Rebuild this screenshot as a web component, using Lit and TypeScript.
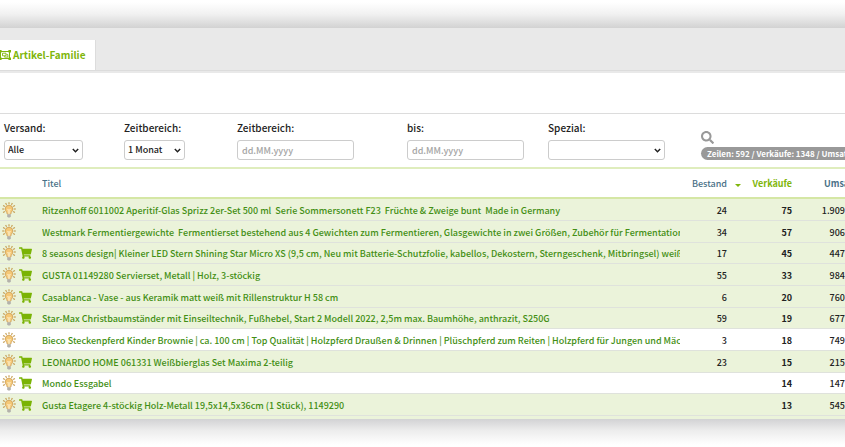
import { LitElement, html, css, svg, nothing } from "lit";
import { customElement } from "lit/decorators.js";
import { classMap } from "lit/directives/class-map.js";

interface Article {
  title: string;
  stock: string;
  sales: string;
  revenue: string;
  cart: boolean;
  marked: boolean;
}

const row = (title: string, stock: string, sales: string, revenue: string, cart = true, marked = true): Article =>
  ({ title, stock, sales, revenue, cart, marked });

const ARTICLES: Article[] = [
  row("Ritzenhoff 6011002 Aperitif-Glas Sprizz 2er-Set 500 ml  Serie Sommersonett F23  Früchte & Zweige bunt  Made in Germany", "24", "75", "1.909", false),
  row("Westmark Fermentiergewichte  Fermentierset bestehend aus 4 Gewichten zum Fermentieren, Glasgewichte in zwei Größen, Zubehör für Fermentation", "34", "57", "906", false),
  row("8 seasons design| Kleiner LED Stern Shining Star Micro XS (9,5 cm, Neu mit Batterie-Schutzfolie, kabellos, Dekostern, Sterngeschenk, Mitbringsel) weiß", "17", "45", "447"),
  row("GUSTA 01149280 Servierset, Metall | Holz, 3-stöckig", "55", "33", "984"),
  row("Casablanca - Vase - aus Keramik matt weiß mit Rillenstruktur H 58 cm", "6", "20", "760"),
  row("Star-Max Christbaumständer mit Einseiltechnik, Fußhebel, Start 2 Modell 2022, 2,5m max. Baumhöhe, anthrazit, S250G", "59", "19", "677"),
  row("Bieco Steckenpferd Kinder Brownie | ca. 100 cm | Top Qualität | Holzpferd Draußen & Drinnen | Plüschpferd zum Reiten | Holzpferd für Jungen und Mäc", "3", "18", "749", false, false),
  row("LEONARDO HOME 061331 Weißbierglas Set Maxima 2-teilig", "23", "15", "215"),
  row("Mondo Essgabel", "", "14", "147", true, false),
  row("Gusta Etagere 4-stöckig Holz-Metall 19,5x14,5x36cm (1 Stück), 1149290", "", "13", "545"),
];

const RAYS = [-120, -90, -60, -30, 0, 30, 60, 90, 120];

const bulbIcon = html`<svg class="bulb" viewBox="0 0 14 16" aria-hidden="true">
  ${RAYS.map((a) => svg`<path d="M7 0.2V2.2" transform="rotate(${a} 7 7)" stroke="#c39a4c" stroke-width="1.1" />`)}
  <path d="M7 3.200a3.800 3.800 0 0 0-3.800 3.800c0 2.100 1.900 2.800 2 5h3.600c.1-2.200 2-2.900 2-5A3.800 3.800 0 0 0 7 3.200z" fill="#f5c877" stroke="#cfa057" stroke-width="0.9" />
  <path d="M5.300 7.200l1 1.200.7-1.200.7 1.200 1-1.200M6.300 8.400V12M7.700 8.400V12" fill="none" stroke="#fff3d4" stroke-width="0.7" />
  <path d="M5.200 12.300h3.600v2L8 15.600H6l-.8-1.300z" fill="#b3b1ab" />
</svg>`;

const cartIcon = html`<svg class="cart" viewBox="0 0 576 512" aria-hidden="true"><path fill="currentColor" d="M528.12 301.319l47.273-208C578.806 78.301 567.391 64 551.99 64H159.208l-9.166-44.81C147.758 8.021 137.93 0 126.529 0H24C10.745 0 0 10.745 0 24v16c0 13.255 10.745 24 24 24h69.883l70.248 343.435C147.325 417.1 136 435.222 136 456c0 30.928 25.072 56 56 56s56-25.072 56-56c0-15.674-6.447-29.835-16.824-40h209.647C430.447 426.165 424 440.326 424 456c0 30.928 25.072 56 56 56s56-25.072 56-56c0-22.172-12.888-41.332-31.579-50.405l5.517-24.276c3.413-15.018-8.002-29.319-23.403-29.319H218.117l-6.545-32h293.145c11.206 0 20.92-7.754 23.403-18.681z"/></svg>`;

const searchIcon = html`<svg viewBox="0 0 512 512" aria-hidden="true"><path fill="currentColor" d="M505 442.7L405.3 343c-4.500-4.500-10.600-7-17-7H372c27.600-35.300 44-79.700 44-128C416 93.100 322.900 0 208 0S0 93.100 0 208s93.100 208 208 208c48.300 0 92.700-16.400 128-44v16.300c0 6.400 2.500 12.500 7 17l99.700 99.700c9.400 9.400 24.600 9.400 33.900 0l28.300-28.300c9.400-9.400 9.400-24.600.1-34zM208 336c-70.700 0-128-57.200-128-128 0-70.700 57.200-128 128-128 70.700 0 128 57.200 128 128 0 70.700-57.200 128-128 128z"/></svg>`;

const groupIcon = html`<svg class="group" viewBox="0 0 12 10" aria-hidden="true">
  <path d="M1.500 1.500h9v7h-9z" fill="none" stroke="currentColor" stroke-width="1" />
  <path d="M0 0h2.600v2.600H0zM9.400 0H12v2.600H9.400zM0 7.400h2.600V10H0zM9.400 7.400H12V10H9.400z" fill="currentColor" />
  <path d="M3.500 3.200h3.500v2.600H3.500zM7.500 4.600h1.400v2.500H5.500V6.300" fill="none" stroke="currentColor" stroke-width="0.9" />
</svg>`;

@customElement("app-root")
export class AppRoot extends LitElement {
  static styles = css`
    :host {
      display: block;
      overflow: hidden;
      background: #fff;
      color: #222;
      font: 500 9px/16px "Noto Sans CJK SC", "Noto Sans", sans-serif;
    }
    * { box-sizing: border-box; }
    button, input, select { font: inherit; color: inherit; margin: 0; }
    button { border: 0; background: none; padding: 0; cursor: pointer; }
    a { color: inherit; text-decoration: none; }
    svg { display: block; flex: none; }

    .shade { height: 28px; }
    .shade.above { background: linear-gradient(#fff 8%, #f1f1f1 50%, #d2d2d2); }
    .shade.below { background: linear-gradient(#d2d2d4, #ececec 40%, #fff 92%); }

    .tabs {
      display: flex;
      background: #e9e9e9;
      padding-top: 12px;
      border-bottom: 2px solid #e9e9e9;
      box-shadow: inset 0 -1px #dcdcdc;
    }
    .tab {
      display: flex;
      align-items: center;
      gap: 2px;
      height: 30px;
      margin-left: -1px;
      margin-bottom: 1px;
      padding-right: 10px;
      background: #fff;
      border-right: 1px solid #dcdcdc;
      color: #80b60b;
      font-size: 10px;
      font-weight: 700;
    }
    .group { width: 12px; height: 10px; }
    .spacer { height: 40px; }

    .filters {
      display: grid;
      grid-template-columns: 120px 113px 170px 141px 153px 1fr;
      padding: 6px 0 7px 4px;
      border-top: 1px solid #dcdcdc;
      border-bottom: 2px solid #dfedbd;
    }
    .field { display: flex; flex-direction: column; align-items: flex-start; gap: 4px; }
    .field label { font-size: 10px; }
    .control {
      height: 20px;
      padding: 0 4px;
      border: 1px solid #ccc;
      border-radius: 3px;
      background: #fff;
      outline: 0;
    }
    select.control {
      appearance: none;
      padding: 0 14px 0 3px;
      background: #fff url("data:image/svg+xml,%3Csvg xmlns='http://www.w3.org/2000/svg' viewBox='0 0 7 5'%3E%3Cpath d='M.8 1l2.700 2.700L6.200 1' fill='none' stroke='%23222' stroke-width='1.500'/%3E%3C/svg%3E") no-repeat right 3px center / 7px 5px;
    }
    .control::placeholder { color: #a5a5a5; opacity: 1; }
    .small { width: 61px; }
    .medium { width: 79px; }
    .large { width: 117px; }
    .summary { display: flex; flex-direction: column; align-items: flex-start; gap: 3px; padding-top: 11px; min-width: 0; }
    .search { color: #999; }
    .search svg { width: 13px; height: 13px; }
    .badge {
      padding: 0 6px;
      line-height: 13px;
      border-radius: 7px;
      background: #999;
      color: #fff;
      font-size: 8px;
      font-weight: 700;
      white-space: nowrap;
    }

    table { width: 100%; table-layout: fixed; border-collapse: separate; border-spacing: 0; }
    th, td { padding: 2px 0 0; height: 22px; text-align: right; white-space: pre; }
    th { height: 30px; color: #4a7187; font-weight: 500; border-bottom: 2px solid #d5e7a5; }
    td { border-bottom: 1px solid #dfe2dc; }
    tr:nth-child(3n) td { height: 21px; }
    .marked td { background: #ebf3da; }
    .icons { width: 42px; padding: 0; }
    .title { text-align: left; overflow: hidden; }
    td.title { color: #438f14; }
    .stock { width: 47px; }
    .sales { width: 65px; }
    .revenue { width: 53px; }
    td.sales, th.revenue { font-weight: 700; }
    th.revenue { text-align: left; padding-left: 32px; }
    .sorted { color: #80b60b; font-weight: 700; display: inline-flex; align-items: center; gap: 12px; }
    .sorted svg { width: 6px; height: 3px; margin-top: 4px; }
    .marks { display: flex; align-items: center; gap: 3px; padding-left: 2px; }
    .bulb { width: 14px; height: 16px; }
    .cart { width: 13px; height: 12px; color: #7ab305; }
    .rest { height: 3px; background: #ebf3da; }
  `;

  render() {
    return html`
      <div class="shade above"></div>
      <nav class="tabs"><a class="tab" href="#familie">${groupIcon}<span>Artikel-Familie</span></a></nav>
      <div class="spacer"></div>
      <form class="filters">
        <div class="field">
          <label for="shipping">Versand:</label>
          <select class="control medium" id="shipping"><option>Alle</option></select>
        </div>
        <div class="field">
          <label for="period">Zeitbereich:</label>
          <select class="control small" id="period"><option>1 Monat</option></select>
        </div>
        <div class="field">
          <label for="from">Zeitbereich:</label>
          <input class="control large" id="from" type="text" placeholder="dd.MM.yyyy" />
        </div>
        <div class="field">
          <label for="to">bis:</label>
          <input class="control large" id="to" type="text" placeholder="dd.MM.yyyy" />
        </div>
        <div class="field">
          <label for="special">Spezial:</label>
          <select class="control large" id="special"><option></option></select>
        </div>
        <div class="summary">
          <button class="search" type="button" aria-label="Suchen">${searchIcon}</button>
          <span class="badge">Zeilen: 592 / Verkäufe: 1348 / Umsatz:</span>
        </div>
      </form>
      <table>
        <thead>
          <tr>
            <th class="icons"></th>
            <th class="title">Titel</th>
            <th class="stock">Bestand</th>
            <th class="sales"><button class="sorted"><svg viewBox="0 0 6 3" aria-hidden="true"><path d="M0 0h6L3 3z" fill="currentColor" /></svg>Verkäufe</button></th>
            <th class="revenue">Umsatz</th>
          </tr>
        </thead>
        <tbody>
          ${ARTICLES.map((a) => html`<tr class=${classMap({ marked: a.marked })}>
            <td class="icons"><div class="marks">${bulbIcon}${a.cart ? cartIcon : nothing}</div></td>
            <td class="title"><a href="#artikel">${a.title}</a></td>
            <td class="stock">${a.stock}</td>
            <td class="sales">${a.sales}</td>
            <td class="revenue">${a.revenue}</td>
          </tr>`)}
        </tbody>
      </table>
      <div class="rest"></div>
      <div class="shade below"></div>
    `;
  }
}
